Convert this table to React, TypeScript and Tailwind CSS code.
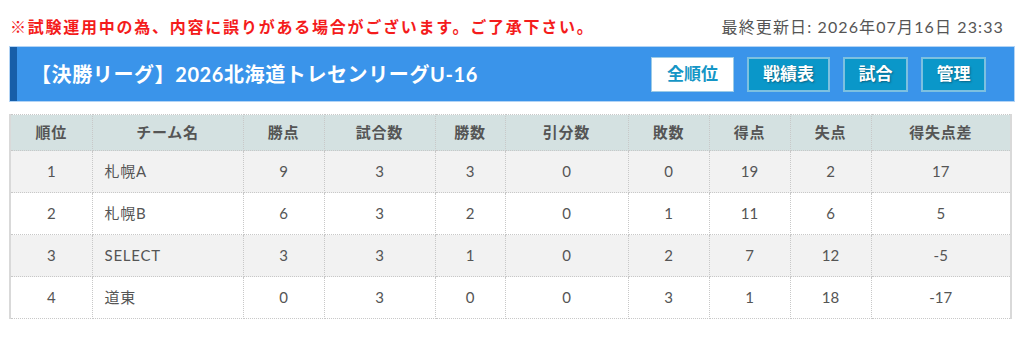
import React from 'react';

// 順位表の行データ
interface StandingRow {
  rank: number;
  team: string;
  points: number;
  played: number;
  win: number;
  draw: number;
  lose: number;
  goalsFor: number;
  goalsAgainst: number;
  diff: number;
}

const rows: StandingRow[] = [
  { rank: 1, team: '札幌A', points: 9, played: 3, win: 3, draw: 0, lose: 0, goalsFor: 19, goalsAgainst: 2, diff: 17 },
  { rank: 2, team: '札幌B', points: 6, played: 3, win: 2, draw: 0, lose: 1, goalsFor: 11, goalsAgainst: 6, diff: 5 },
  { rank: 3, team: 'SELECT', points: 3, played: 3, win: 1, draw: 0, lose: 2, goalsFor: 7, goalsAgainst: 12, diff: -5 },
  { rank: 4, team: '道東', points: 0, played: 3, win: 0, draw: 0, lose: 3, goalsFor: 1, goalsAgainst: 18, diff: -17 },
];

const columns = [
  { label: '順位', width: 'w-[82px]' },
  { label: 'チーム名', width: 'w-[151px]' },
  { label: '勝点', width: 'w-[81px]' },
  { label: '試合数', width: 'w-[111px]' },
  { label: '勝数', width: 'w-[70px]' },
  { label: '引分数', width: 'w-[123px]' },
  { label: '敗数', width: 'w-[81px]' },
  { label: '得点', width: 'w-[81px]' },
  { label: '失点', width: 'w-[81px]' },
  { label: '得失点差', width: 'w-[140px]' },
];

const cell = 'border border-dotted border-[#c8c8c8] h-[42px] text-center';

const App = () => {
  return (
    <div className="w-[1024px] h-[338px] bg-white font-['Lato','Noto_Sans_CJK_JP',sans-serif] text-[#555]">
      {/* お知らせ + 更新日 */}
      <div className="flex items-center justify-between pl-[10px] pr-[20px] pt-[8px] h-[46px]">
        <p className="text-[16px] font-bold text-[#f41c1c] tracking-[0.11em] leading-none">
          ※試験運用中の為、内容に誤りがある場合がございます。ご了承下さい。
        </p>
        <p className="text-[16px] text-[#555] tracking-[0.07em] leading-none">最終更新日: 2026年07月16日 23:33</p>
      </div>

      {/* タイトルバー */}
      <div className="mx-[9px] h-[56px] flex items-center border border-[#b3d4f5] bg-[#3a94ea]">
        <div className="w-[7px] h-full bg-[#175ea8]" />
        <h1 className="ml-[14px] text-[20px] font-bold text-white tracking-[0.03em]">
          【決勝リーグ】2026北海道トレセンリーグU-16
        </h1>
        <div className="ml-auto mr-[28px] flex gap-[13px]">
          <button className="h-[35px] w-[83px] bg-white border border-[#9ccbe6] text-[#1596c6] text-[17px] font-bold">
            全順位
          </button>
          {['戦績表', '試合', '管理'].map((label) => (
            <button
              key={label}
              className={`h-[35px] ${label === '戦績表' ? 'w-[83px]' : 'w-[65px]'} bg-[#0a97c9] border-2 border-[#7cc0e0] text-white text-[17px] font-bold [text-shadow:1px_1px_2px_rgba(0,0,0,0.35)]`}
            >
              {label}
            </button>
          ))}
        </div>
      </div>

      {/* 順位表 */}
      <table className="mx-[9px] mt-[12px] w-[1002px] border-collapse border-x-2 border-x-[#d9d9d9] text-[15px] table-fixed">
        <thead>
          <tr className="bg-[#d4e1e1]">
            {columns.map((c) => (
              <th
                key={c.label}
                className={`${c.width} h-[36px] border border-dotted border-[#c8c8c8] font-bold text-[#555] tracking-[0.05em]`}
              >
                {c.label}
              </th>
            ))}
          </tr>
        </thead>
        <tbody>
          {rows.map((r, i) => (
            <tr key={r.rank} className={i % 2 === 0 ? 'bg-[#f2f2f2]' : 'bg-white'}>
              <td className={cell}>{r.rank}</td>
              <td className={`${cell} !text-left pl-[12px] tracking-[0.05em]`}>{r.team}</td>
              <td className={cell}>{r.points}</td>
              <td className={cell}>{r.played}</td>
              <td className={cell}>{r.win}</td>
              <td className={cell}>{r.draw}</td>
              <td className={cell}>{r.lose}</td>
              <td className={cell}>{r.goalsFor}</td>
              <td className={cell}>{r.goalsAgainst}</td>
              <td className={cell}>{r.diff}</td>
            </tr>
          ))}
        </tbody>
      </table>
    </div>
  );
};

export default App;
